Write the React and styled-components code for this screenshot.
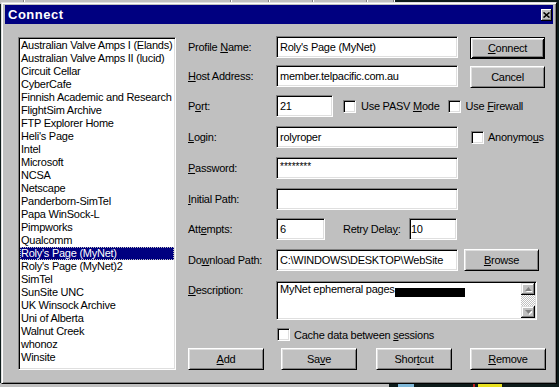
import React from 'react';
import styled, { createGlobalStyle } from 'styled-components';

const GlobalStyle = createGlobalStyle`
  html, body { margin: 0; padding: 0; }
  body {
    background: #0e1c1b;
    font-family: "Liberation Sans", Arial, sans-serif;
    font-size: 11px;
    letter-spacing: -0.25px;
    color: #000;
  }
  #root { width: 559px; height: 387px; overflow: hidden; }
`;

const Desktop = styled.div`
  position: relative;
  width: 559px;
  height: 387px;
  overflow: hidden;
  background: #0e1c1b;
`;

const BackBar = styled.div`
  position: absolute;
  left: 0;
  top: ${p => p.$top}px;
  width: ${p => p.$w}px;
  height: 8px;
  display: flex;
  background: #c0c0c0;
`;

const BackCell = styled.div`
  width: ${p => p.$w}px;
  flex-shrink: 0;
  border-right: 1px solid #808080;
  box-shadow: 1px 0 #fff;
`;

const Spot = styled.div`
  position: absolute;
  left: ${p => p.$left}px;
  top: 384px;
  width: ${p => p.$w}px;
  height: 3px;
  background: ${p => p.$color};
`;

const Dialog = styled.div`
  position: absolute;
  left: 1px;
  top: 2px;
  width: 556px;
  height: 382px;
  box-sizing: border-box;
  background: #c0c0c0;
  border: 1px solid;
  border-color: #dfdfdf #000 #000 #dfdfdf;
  box-shadow: inset 1px 1px #fff, inset -1px -1px #808080;
  padding: 2px 3px;
  display: flex;
  flex-direction: column;
`;

const TitleBar = styled.div`
  height: 19px;
  flex-shrink: 0;
  background: #000080;
  display: flex;
  align-items: center;
  padding-left: 3px;
  color: #fff;
  font-weight: bold;
  font-size: 13px;
  letter-spacing: 0.5px;
`;

const CloseButton = styled.div`
  margin-left: auto;
  margin-right: 1px;
  width: 11px;
  height: 12px;
  background: #c0c0c0;
  box-shadow: inset -1px -1px #000, inset 1px 1px #fff, inset -2px -2px #808080;
  display: flex;
  align-items: center;
  justify-content: center;
`;

const Body = styled.div`
  display: flex;
  align-items: flex-start;
  padding: 12px 0 0 13px;
`;

const ListBox = styled.div`
  margin-top: 1px;
  width: 158px;
  height: 333px;
  box-sizing: border-box;
  background: #fff;
  border: 1px solid;
  border-color: #808080 #fff #fff #808080;
  box-shadow: inset 1px 1px #000, inset -1px -1px #dfdfdf;
  padding: 1px;
  overflow: hidden;
`;

const ListItem = styled.div`
  height: 13px;
  line-height: 13px;
  padding-left: 1px;
  white-space: nowrap;
  overflow: hidden;
  background: ${p => (p.$selected ? '#000080' : 'transparent')};
  color: ${p => (p.$selected ? '#fff' : '#000')};
  outline: ${p => (p.$selected ? '1px dotted #c0c0c0' : 'none')};
  outline-offset: -1px;
`;

const Form = styled.div`
  margin-left: 12px;
  display: flex;
  flex-direction: column;
`;

const Row = styled.div`
  display: flex;
  align-items: ${p => (p.$top ? 'flex-start' : 'center')};
  height: ${p => (p.$h ? `${p.$h}px` : '22px')};
  margin-top: ${p => p.$mt || 0}px;
  padding-left: ${p => p.$pl || 0}px;
`;

const Label = styled.div`
  width: ${p => p.$w || 88}px;
  flex-shrink: 0;
  margin-left: ${p => p.$ml || 0}px;
  padding-top: ${p => p.$pt || 0}px;
  line-height: 13px;
  white-space: nowrap;
`;

const Key = styled.span`
  text-decoration: underline;
`;

const Field = styled.div`
  width: ${p => p.$w}px;
  height: 22px;
  flex-shrink: 0;
  margin-left: ${p => p.$ml || 0}px;
  box-sizing: border-box;
  background: #fff;
  border: 1px solid;
  border-color: #808080 #fff #fff #808080;
  box-shadow: inset 1px 1px #000, inset -1px -1px #dfdfdf;
  padding: 0 ${p => (p.$pad === undefined ? 3 : p.$pad)}px;
  display: flex;
  align-items: center;
  white-space: nowrap;
  overflow: hidden;
`;

const Masked = styled.span`
  font-size: 10px;
  letter-spacing: 0;
  position: relative;
  top: -2px;
`;

const Button = styled.button`
  width: ${p => p.$w || 76}px;
  height: 22px;
  flex-shrink: 0;
  margin-left: ${p => p.$ml || 0}px;
  margin-top: ${p => p.$mt || 0}px;
  align-self: ${p => (p.$mt ? 'flex-start' : 'auto')};
  box-sizing: border-box;
  padding: 0;
  background: #c0c0c0;
  font-family: "Liberation Sans", Arial, sans-serif;
  font-size: 11px;
  letter-spacing: -0.25px;
  color: #000;
  cursor: default;
  border: 1px solid;
  border-color: ${p => (p.$default ? '#000' : '#fff #000 #000 #fff')};
  box-shadow: ${p =>
    p.$default
      ? 'inset 1px 1px #fff, inset -1px -1px #000, inset 2px 2px #dfdfdf, inset -2px -2px #808080'
      : 'inset 1px 1px #dfdfdf, inset -1px -1px #808080'};
`;

const CheckBox = styled.div`
  width: 13px;
  height: 13px;
  flex-shrink: 0;
  margin-left: ${p => p.$ml || 0}px;
  box-sizing: border-box;
  background: #fff;
  border: 1px solid;
  border-color: #808080 #fff #fff #808080;
  box-shadow: inset 1px 1px #000, inset -1px -1px #dfdfdf;
`;

const CheckText = styled.span`
  margin-left: ${p => p.$ml || 5}px;
  white-space: nowrap;
`;

const TextArea = styled.div`
  width: 261px;
  height: 39px;
  margin-top: 1px;
  flex-shrink: 0;
  box-sizing: border-box;
  background: #fff;
  border: 1px solid;
  border-color: #808080 #fff #fff #808080;
  box-shadow: inset 1px 1px #000, inset -1px -1px #dfdfdf;
  padding: 1px;
  display: flex;
`;

const TextContent = styled.div`
  flex: 1;
  padding: 0 2px;
  line-height: 13px;
  white-space: nowrap;
  overflow: hidden;
`;

const Redacted = styled.span`
  display: inline-block;
  width: 70px;
  height: 9px;
  background: #000;
  vertical-align: -4px;
`;

const ScrollBar = styled.div`
  width: 14px;
  display: flex;
  flex-direction: column;
`;

const ScrollTrack = styled.div`
  flex: 1;
  background-color: #fff;
  background-image: repeating-conic-gradient(#c0c0c0 0 25%, #fff 0 50%);
  background-size: 2px 2px;
`;

const ScrollButton = styled.div`
  height: 12px;
  box-sizing: border-box;
  background: #c0c0c0;
  box-shadow: inset -1px -1px #000, inset 1px 1px #dfdfdf, inset -2px -2px #808080, inset 2px 2px #fff;
  display: flex;
  align-items: center;
  justify-content: center;
`;

const Arrow = ({ down }) => (
  <svg width="7" height="5" viewBox="0 0 7 5">
    <polygon
      points={down ? '1,1 8,1 4.5,5' : '1,5 8,5 4.5,1'}
      fill="#fff"
    />
    <polygon
      points={down ? '0,0 7,0 3.5,4' : '0,4 7,4 3.5,0'}
      fill="#808080"
    />
  </svg>
);

const sites = [
  'Australian Valve Amps I (Elands)',
  'Australian Valve Amps II (lucid)',
  'Circuit Cellar',
  'CyberCafe',
  'Finnish Academic and Research',
  'FlightSim Archive',
  'FTP Explorer Home',
  "Heli's Page",
  'Intel',
  'Microsoft',
  'NCSA',
  'Netscape',
  'Panderborn-SimTel',
  'Papa WinSock-L',
  'Pimpworks',
  'Qualcomm',
  "Roly's Page (MyNet)",
  "Roly's Page (MyNet)2",
  'SimTel',
  'SunSite UNC',
  'UK Winsock Archive',
  'Uni of Alberta',
  'Walnut Creek',
  'whonoz',
  'Winsite',
];

export default function App() {
  return (
    <>
      <GlobalStyle />
      <Desktop>
        <BackBar $top={-4} $w={395}>
          <BackCell $w={23} />
          <BackCell $w={206} />
          <BackCell $w={37} />
          <BackCell $w={43} />
          <BackCell $w={53} />
          <BackCell $w={26} />
        </BackBar>
        <BackBar $top={383} $w={389} />
        <Spot $left={398} $w={16} $color="#7fb8d8" />
        <Spot $left={473} $w={2} $color="#c02020" />
        <Spot $left={478} $w={24} $color="#e8e020" />

        <Dialog>
          <TitleBar>
            Connect
            <CloseButton>
              <svg width="7" height="6" viewBox="0 0 7 6">
                <path d="M0.5 0.5 L6.5 5.5 M6.5 0.5 L0.5 5.5" stroke="#000" strokeWidth="1.6" />
              </svg>
            </CloseButton>
          </TitleBar>

          <Body>
            <ListBox>
              {sites.map(s => (
                <ListItem key={s} $selected={s === "Roly's Page (MyNet)"}>
                  {s}
                </ListItem>
              ))}
            </ListBox>

            <Form>
              <Row>
                <Label>Profile <Key>N</Key>ame:</Label>
                <Field $w={182}>Roly's Page (MyNet)</Field>
                <Button $default $w={75} $ml={12} $mt={1}><Key>C</Key>onnect</Button>
              </Row>

              <Row $mt={7}>
                <Label><Key>H</Key>ost Address:</Label>
                <Field $w={182}>member.telpacific.com.au</Field>
                <Button $w={75} $ml={12} $mt={1}>Cancel</Button>
              </Row>

              <Row $mt={8}>
                <Label>P<Key>o</Key>rt:</Label>
                <Field $w={57}>21</Field>
                <CheckBox $ml={10} />
                <CheckText>Use PASV <Key>M</Key>ode</CheckText>
                <CheckBox $ml={8} />
                <CheckText>Use <Key>F</Key>irewall</CheckText>
              </Row>

              <Row $mt={9}>
                <Label><Key>L</Key>ogin:</Label>
                <Field $w={182}>rolyroper</Field>
                <CheckBox $ml={13} />
                <CheckText $ml={4}>Anonymo<Key>u</Key>s</CheckText>
              </Row>

              <Row $mt={9}>
                <Label><Key>P</Key>assword:</Label>
                <Field $w={182}><Masked>********</Masked></Field>
              </Row>

              <Row $mt={9}>
                <Label><Key>I</Key>nitial Path:</Label>
                <Field $w={182} />
              </Row>

              <Row $mt={8}>
                <Label>Att<Key>e</Key>mpts:</Label>
                <Field $w={49}>6</Field>
                <Label $w={66} $ml={18}>Retry Dela<Key>y</Key>:</Label>
                <Field $w={48} $pad={1}>10</Field>
              </Row>

              <Row $mt={9}>
                <Label>Do<Key>w</Key>nload Path:</Label>
                <Field $w={182}>C:\WINDOWS\DESKTOP\WebSite</Field>
                <Button $w={75} $ml={6}><Key>B</Key>rowse</Button>
              </Row>

              <Row $mt={9} $h={40} $top>
                <Label $pt={4}><Key>D</Key>escription:</Label>
                <TextArea>
                  <TextContent>
                    MyNet ephemeral pages<Redacted />
                  </TextContent>
                  <ScrollBar>
                    <ScrollButton><Arrow /></ScrollButton>
                    <ScrollTrack />
                    <ScrollButton><Arrow down /></ScrollButton>
                  </ScrollBar>
                </TextArea>
              </Row>

              <Row $mt={8} $h={13} $pl={89}>
                <CheckBox />
                <CheckText $ml={4}>Cache data between <Key>s</Key>essions</CheckText>
              </Row>

              <Row $mt={7}>
                <Button><Key>A</Key>dd</Button>
                <Button $ml={17}>Sa<Key>v</Key>e</Button>
                <Button $ml={19}>Shor<Key>t</Key>cut</Button>
                <Button $ml={18}><Key>R</Key>emove</Button>
              </Row>
            </Form>
          </Body>
        </Dialog>
      </Desktop>
    </>
  );
}
